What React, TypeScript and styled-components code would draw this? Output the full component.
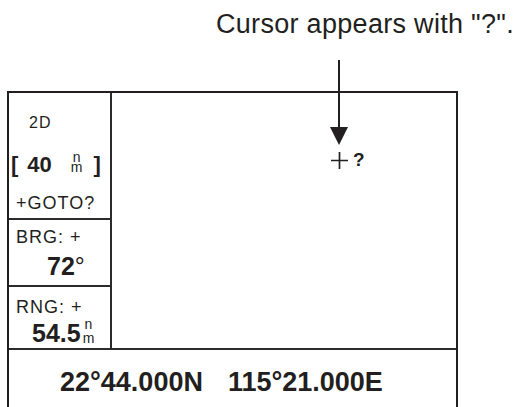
import React from 'react'
import styled, { createGlobalStyle } from 'styled-components'

const INK = '#231f20'

const GlobalStyle = createGlobalStyle`
    html, body {
        margin: 0;
        padding: 0;
        background: #fff;
    }
    body {
        font-family: 'Liberation Sans', Arial, Helvetica, sans-serif;
        color: ${INK};
    }
`

const Page = styled.div`
    position: relative;
    width: 516px;
    height: 407px;
    overflow: hidden;
    background: #fff;
`

const Caption = styled.div`
    height: 91px;
    box-sizing: border-box;
    padding: 8px 2px 0 0;
    text-align: right;
    font-size: 27px;
    line-height: 32px;
    letter-spacing: 0.3px;
    white-space: nowrap;
`

const Pointer = styled.svg`
    position: absolute;
    left: 0;
    top: 0;
    pointer-events: none;
`

const Display = styled.div`
    margin-left: 7px;
    width: 451px;
    height: 340px;
    box-sizing: border-box;
    border: 2px solid ${INK};
    display: flex;
    flex-direction: column;
`

const MainArea = styled.div`
    display: grid;
    grid-template-columns: 103px 1fr;
    height: 255px;
`

const SideColumn = styled.div`
    display: flex;
    flex-direction: column;
    border-right: 2px solid #2b2b2b;
`

const Cell = styled.div<{ $height?: number; $padTop: number }>`
    box-sizing: border-box;
    ${(p) => (p.$height ? `height: ${p.$height}px;` : 'flex: 1;')}
    ${(p) => (p.$height ? 'border-bottom: 2px solid #2b2b2b;' : '')}
    padding-top: ${(p) => p.$padTop}px;
`

const Label = styled.div<{ $indent: number; $gap?: number }>`
    font-size: 18px;
    line-height: 22px;
    letter-spacing: 1px;
    padding-left: ${(p) => p.$indent}px;
    margin-top: ${(p) => p.$gap ?? 0}px;
    white-space: nowrap;
`

const ModeLabel = styled(Label)`
    font-size: 16px;
    line-height: 20px;
`

const Value = styled.div<{ $indent: number; $gap?: number; $size: number }>`
    display: flex;
    align-items: flex-start;
    font-size: ${(p) => p.$size}px;
    line-height: ${(p) => p.$size + 3}px;
    font-weight: 700;
    padding-left: ${(p) => p.$indent}px;
    margin-top: ${(p) => p.$gap ?? 0}px;
    white-space: nowrap;
`

const Bracket = styled.span<{ $before?: number; $after?: number }>`
    margin-left: ${(p) => p.$before ?? 0}px;
    margin-right: ${(p) => p.$after ?? 0}px;
`

const Degree = styled.span`
    font-weight: 400;
`

const UnitStack = styled.span<{ $size: number; $lh: number; $shift: number; $space: number }>`
    display: flex;
    flex-direction: column;
    align-items: center;
    font-size: ${(p) => p.$size}px;
    line-height: ${(p) => p.$lh}px;
    font-weight: 400;
    margin-top: ${(p) => p.$shift}px;
    margin-left: ${(p) => p.$space}px;
`

const MapArea = styled.div`
    padding: 59px 0 0 219px;
`

const Cursor = styled.div`
    display: flex;
    align-items: flex-start;
`

const CursorMark = styled.span`
    margin: -2px 0 0 5px;
    font-size: 19px;
    line-height: 19px;
    font-weight: 700;
`

const PositionRow = styled.div`
    flex: 1;
    display: flex;
    gap: 25px;
    border-top: 2px solid #2b2b2b;
    padding: 16px 0 0 51px;
    font-size: 27px;
    line-height: 32px;
    font-weight: 700;
    white-space: nowrap;
`

const Crosshair = () => (
    <svg width={17} height={17} viewBox="0 0 17 17">
        <path d="M8.5 0V17M0 8.5H17" stroke={INK} strokeWidth={1.7} />
    </svg>
)

const Units = ({ size, lh, shift, space }: { size: number; lh: number; shift: number; space: number }) => (
    <UnitStack $size={size} $lh={lh} $shift={shift} $space={space}>
        <span>n</span>
        <span>m</span>
    </UnitStack>
)

const App = () => {
    return (
        <Page>
            <GlobalStyle />
            <Caption>Cursor appears with &quot;?&quot;.</Caption>
            <Display>
                <MainArea>
                    <SideColumn>
                        <Cell $height={127} $padTop={20}>
                            <ModeLabel $indent={20}>2D</ModeLabel>
                            <Value $indent={2} $gap={19} $size={22}>
                                <Bracket $after={9}>[</Bracket>
                                <span>40</span>
                                <Units size={14} lh={10} shift={0} space={19} />
                                <Bracket $before={11}>]</Bracket>
                            </Value>
                            <Label $indent={7} $gap={15}>
                                +GOTO?
                            </Label>
                        </Cell>
                        <Cell $height={67} $padTop={6}>
                            <Label $indent={7}>BRG: +</Label>
                            <Value $indent={38} $gap={4} $size={25}>
                                72<Degree>°</Degree>
                            </Value>
                        </Cell>
                        <Cell $padTop={9}>
                            <Label $indent={7}>RNG: +</Label>
                            <Value $indent={23} $gap={1} $size={25}>
                                54.5
                                <Units size={14} lh={14} shift={-2} space={2} />
                            </Value>
                        </Cell>
                    </SideColumn>
                    <MapArea>
                        <Cursor>
                            <Crosshair />
                            <CursorMark>?</CursorMark>
                        </Cursor>
                    </MapArea>
                </MainArea>
                <PositionRow>
                    <span>22°44.000N</span>
                    <span>115°21.000E</span>
                </PositionRow>
            </Display>
            <Pointer width={516} height={407} viewBox="0 0 516 407">
                <path d="M339 60V130" stroke={INK} strokeWidth={2} />
                <path d="M330 127H348L339 145Z" fill={INK} />
            </Pointer>
        </Page>
    )
}

export default App
